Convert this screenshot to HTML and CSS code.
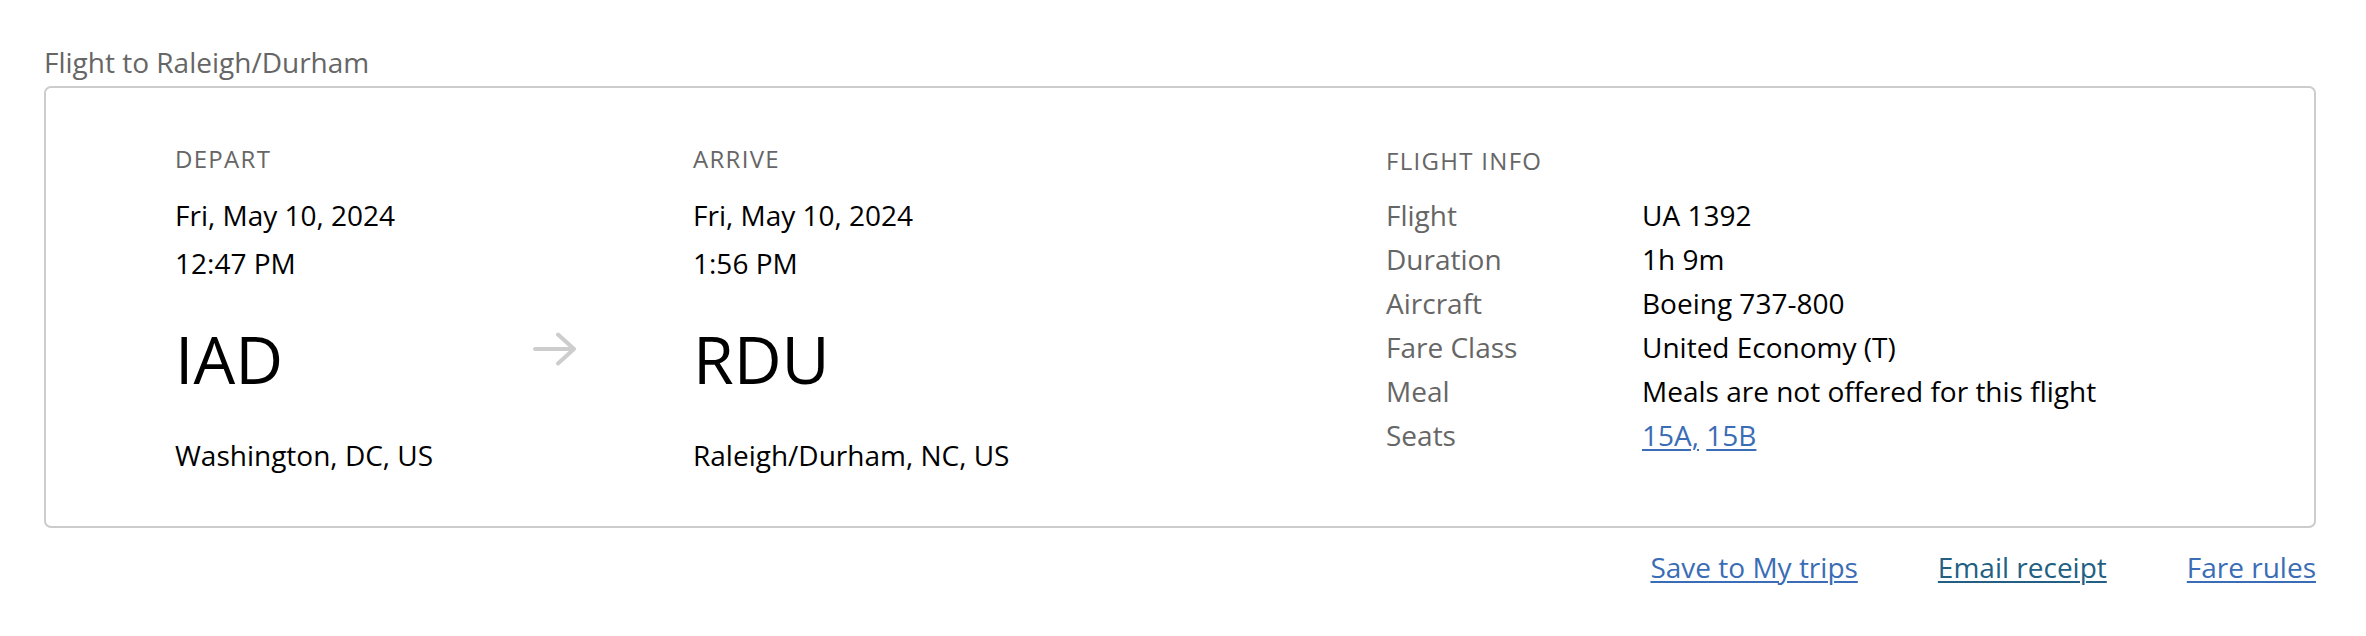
FILE: index.html
```html
<!DOCTYPE html>
<html lang="en">
<head>
<meta charset="utf-8">
<title>Flight to Raleigh/Durham</title>
<link rel="stylesheet" href="styles.css">
</head>
<body>
<div class="page">
  <h2 class="trip-title">Flight to Raleigh/Durham</h2>
  <section class="card">
    <div class="col col-depart">
      <div class="label">DEPART</div>
      <div class="line">Fri, May 10, 2024</div>
      <div class="line">12:47 PM</div>
      <div class="code">IAD</div>
      <div class="city">Washington, DC, US</div>
    </div>
    <div class="col col-arrow">
      <svg class="arrow" width="44" height="34" viewBox="0 0 44 34" aria-hidden="true">
        <path d="M2 17 H41 M25 2.5 L41 17 L25 31.5" fill="none" stroke="#cdcdcd" stroke-width="4" stroke-linecap="round" stroke-linejoin="round"/>
      </svg>
    </div>
    <div class="col col-arrive">
      <div class="label">ARRIVE</div>
      <div class="line">Fri, May 10, 2024</div>
      <div class="line">1:56 PM</div>
      <div class="code">RDU</div>
      <div class="city">Raleigh/Durham, NC, US</div>
    </div>
    <div class="col col-info">
      <div class="label">FLIGHT INFO</div>
      <dl class="info">
        <dt>Flight</dt><dd>UA 1392</dd>
        <dt>Duration</dt><dd>1h 9m</dd>
        <dt>Aircraft</dt><dd>Boeing 737-800</dd>
        <dt>Fare Class</dt><dd>United Economy (T)</dd>
        <dt>Meal</dt><dd>Meals are not offered for this flight</dd>
        <dt>Seats</dt><dd><a class="link" href="#">15A,</a> <a class="link" href="#">15B</a></dd>
      </dl>
    </div>
  </section>
  <nav class="actions">
    <a class="link" href="#">Save to My trips</a>
    <a class="link link-dark" href="#">Email receipt</a>
    <a class="link" href="#">Fare rules</a>
  </nav>
</div>
</body>
</html>
```

FILE: styles.css
```css
* { box-sizing: border-box; }

html, body {
  margin: 0;
  padding: 0;
  background: #fff;
}

body {
  font-family: "Open Sans", "Liberation Sans", sans-serif;
  font-size: 28px;
  color: #000;
}

.page {
  padding: 42px 0 0 44px;
  width: 2316px;
}

.trip-title {
  margin: 0 0 4px 0;
  font-size: 28px;
  font-weight: 400;
  line-height: 40px;
  color: #666;
}

.card {
  border: 2px solid #cccccc;
  border-radius: 7px;
  padding: 55px 0 47px 129px;
  display: grid;
  grid-template-columns: 359px 159px 693px 1fr;
}

.label {
  font-size: 24px;
  line-height: 32px;
  letter-spacing: 1.3px;
  color: #666;
  margin-bottom: 16px;
}

.line {
  line-height: 48px;
}

.code {
  font-size: 66px;
  line-height: 80px;
  margin-top: 31px;
}

.city {
  line-height: 48px;
  margin-top: 33px;
}

.col-arrow {
  padding-top: 189px;
}

.arrow {
  display: block;
  margin-left: -1px;
}

.col-info {
  padding-top: 2px;
}

.info {
  margin: 0;
  display: grid;
  grid-template-columns: 256px 1fr;
  line-height: 44px;
}

.info dt {
  color: #666;
}

.info dd {
  margin: 0;
  color: #000;
}

.link {
  color: #3a6db5;
  text-decoration: underline;
  text-decoration-thickness: 2px;
  text-underline-offset: 3px;
}

.link-dark {
  color: #225f82;
}

.actions {
  margin-top: 19px;
  display: flex;
  justify-content: flex-end;
  gap: 80px;
  line-height: 40px;
  font-size: 28px;
}
```
